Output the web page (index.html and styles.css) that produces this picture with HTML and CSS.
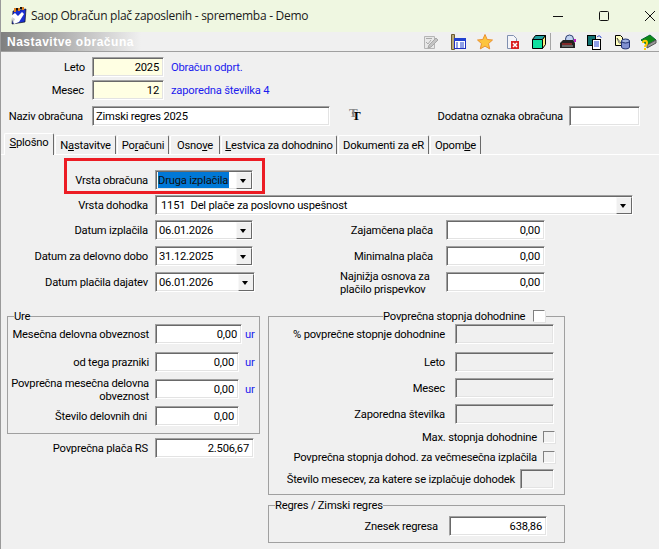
FILE: index.html
```html
<!DOCTYPE html>
<html lang="sl">
<head>
<meta charset="utf-8">
<title>Saop Obračun plač zaposlenih</title>
<link rel="stylesheet" href="styles.css">
</head>
<body>
<div class="window">
  <header class="titlebar">
    <svg class="appicon" width="18" height="18" viewBox="0 0 18 18"><path d="M4 4l13-2-1 13-13 2z" fill="#1a2fd0" stroke="#000" stroke-width=".6"/><path d="M2 9l4-3 3 3 4-4 2 2-5 8-5 2z" fill="#fff"/><path d="M3 10l3 2-2 4z" fill="#ccc"/><path d="M5 1h2v4H5zM9 1h2v3H9zM13 0h2v3h-2z" fill="#e08020"/><path d="M7 1h2v2H7zM11 0h2v2h-2z" fill="#111"/></svg>
    <span class="apptitle">Saop Obračun plač zaposlenih - sprememba - Demo</span>
    <div class="winctl">
      <svg width="12" height="12" viewBox="0 0 12 12"><path d="M1 6.500h10" stroke="#111"/></svg>
      <svg width="12" height="12" viewBox="0 0 12 12"><rect x="1.500" y="1.500" width="9" height="9" rx="1" fill="none" stroke="#111"/></svg>
      <svg width="12" height="12" viewBox="0 0 12 12"><path d="M1 1l10 10M11 1L1 11" stroke="#111"/></svg>
    </div>
  </header>
  <div class="toolbar">
    <span class="formtitle">Nastavitve obračuna</span>
    <div class="tools">
      <svg width="16" height="16" viewBox="0 0 16 16"><path d="M1.500 2.500h10v12h-10z" fill="#e8e8e8" stroke="#b5b5b5"/><path d="M3 8l2 2 3-4M3 4.500h6" stroke="#aaa" fill="none"/><path d="M6 11l7-7 2 2-7 7-3 1z" fill="#c4c4c4" stroke="#a8a8a8"/></svg>
      <svg width="16" height="16" viewBox="0 0 16 16"><path d="M1.500.5h3v15h-3z" fill="#b8a878" stroke="#6b5c30"/><rect x="4.500" y="4.500" width="11" height="10" fill="#fff" stroke="#2030c0"/><rect x="4" y="4" width="12" height="3" fill="#2040d0"/><path d="M6 9h2M10 9h4M6 11h2M10 11h4M6 13h2M10 13h4" stroke="#2040d0"/></svg>
      <svg width="16" height="16" viewBox="0 0 16 16"><path d="M8 .5l2.200 5 5.300.5-4 3.600 1.200 5.300L8 12.100l-4.700 2.800 1.200-5.300-4-3.600 5.300-.5z" fill="#fdc53e" stroke="#ea9030"/></svg>
      <svg width="16" height="16" viewBox="0 0 16 16"><path d="M3.500 1.500h6l3 3v10h-9z" fill="#f4f4f8" stroke="#8090b0"/><rect x="7" y="7" width="8" height="8" fill="#d92020"/><path d="M9 9l4 4M13 9l-4 4" stroke="#fff" stroke-width="1.500"/></svg>
      <svg width="16" height="16" viewBox="0 0 16 16"><path d="M1.500 5.500h10v9h-10z" fill="#10e0a0" stroke="#000"/><path d="M1.500 5.500l3-4h10l-3 4z" fill="#20a0a0" stroke="#000"/><path d="M11.500 5.500l3-4v9l-3 4z" fill="#f8f080" stroke="#000"/></svg>
      <i class="tsep"></i>
      <svg width="16" height="16" viewBox="0 0 16 16"><circle cx="9.500" cy="5" r="4" fill="#c0d0f0" stroke="#304070"/><path d="M0 9l3-3h10l2 3v5H0z" fill="#222"/><path d="M2 10h10" stroke="#e03030"/><path d="M2 12h11" stroke="#aaa"/><rect x="14" y="5" width="2" height="3" fill="#c020c0"/></svg>
      <svg width="16" height="16" viewBox="0 0 16 16"><rect x=".5" y="1.500" width="8" height="10" fill="#107070" stroke="#000"/><rect x="5.500" y="5.500" width="8" height="10" fill="#fff" stroke="#000"/><path d="M7 8h5M7 10h5M7 12h5" stroke="#2040d0"/><path d="M10 3c2-2 4-1 4 1" fill="none" stroke="#2040d0"/></svg>
      <svg width="16" height="16" viewBox="0 0 16 16"><path d="M1.500 1.500h5l2 2v8h-7z" fill="#ffffc0" stroke="#000"/><path d="M7.500 7v6c0 2.500 8 2.500 8 0V7z" fill="#8090d0" stroke="#203070"/><ellipse cx="11.500" cy="7" rx="4" ry="2" fill="#a0b0e0" stroke="#203070"/><path d="M3 4l4 5-2 0z" fill="#fff" stroke="#000" stroke-width=".5"/></svg>
      <svg width="16" height="16" viewBox="0 0 16 16"><path d="M0 6l9-5 6 5-9 5z" fill="#0e8a16" stroke="#063"/><path d="M6 11l9-5v3l-9 5z" fill="#999" stroke="#555"/><path d="M2 9c0-3 4-3 4 0 0 2-2 2-2 4M4 14v2" fill="none" stroke="#fc0" stroke-width="2"/></svg>
    </div>
  </div>

  <section class="head">
    <div class="row hrow">
      <label class="lbl lbl-head">Leto</label>
      <div class="field req num w-year">2025</div>
      <span class="note">Obračun odprt.</span>
    </div>
    <div class="row hrow row-mesec">
      <label class="lbl lbl-head">Mesec</label>
      <div class="field req num w-year">12</div>
      <span class="note">zaporedna številka 4</span>
    </div>
    <div class="row hrow row-naziv">
      <label class="lbl lbl-head">Naziv obračuna</label>
      <div class="field w-name">Zimski regres 2025</div>
      <span class="tt">T</span>
      <label class="lbl-dod">Dodatna oznaka obračuna</label>
      <div class="field w-dod"></div>
    </div>
  </section>

  <nav class="tabs">
    <span class="tab active"><u>S</u>plošno</span>
    <span class="tab t-nast">N<u>a</u>stavitve</span>
    <span class="tab t-por">Po<u>r</u>ačuni</span>
    <span class="tab t-osn">Osno<u>v</u>e</span>
    <span class="tab t-les"><u>L</u>estvica za dohodnino</span>
    <span class="tab t-dok">Dokumenti za eR</span>
    <span class="tab t-opo">Opom<u>b</u>e</span>
  </nav>

  <main class="panel">
    <div class="redbox"></div>
    <div class="row row-vrsta">
      <label class="lbl">Vrsta obračuna</label>
      <div class="combo w-combo"><span class="sel">Druga izplačila</span><b class="drop"></b></div>
    </div>
    <div class="row row-doh">
      <label class="lbl">Vrsta dohodka</label>
      <div class="combo w-doh"><span class="val-doh">1151&nbsp; Del plače za poslovno uspešnost</span><b class="drop"></b></div>
    </div>

    <div class="row row-d1">
      <label class="lbl">Datum izplačila</label>
      <div class="combo w-combo"><span class="val">06.01.2026</span><b class="drop"></b></div>
      <label class="lbl-r">Zajamčena plača</label>
      <div class="field num w-right">0,00</div>
    </div>
    <div class="row row-d2">
      <label class="lbl">Datum za delovno dobo</label>
      <div class="combo w-combo"><span class="val">31.12.2025</span><b class="drop"></b></div>
      <label class="lbl-r">Minimalna plača</label>
      <div class="field num w-right">0,00</div>
    </div>
    <div class="row row-d2">
      <label class="lbl">Datum plačila dajatev</label>
      <div class="combo w-combo2"><span class="val">06.01.2026</span><b class="drop"></b></div>
      <label class="lbl-r lbl-two">Najnižja osnova za<br>plačilo prispevkov</label>
      <div class="field num w-right">0,00</div>
    </div>

    <div class="cols">
      <div class="col-left">
        <fieldset class="group g-ure">
          <legend>Ure</legend>
          <div class="grow">
            <label class="glbl">Mesečna delovna obveznost</label>
            <div class="field num w-ure1">0,00</div><span class="note unit">ur</span>
          </div>
          <div class="grow gap8">
            <label class="glbl">od tega prazniki</label>
            <div class="field num w-ure">0,00</div><span class="note unit2">ur</span>
          </div>
          <div class="grow gap7">
            <label class="glbl tight">Povprečna mesečna delovna<br>obveznost</label>
            <div class="field num w-ure">0,00</div><span class="note unit2">ur</span>
          </div>
          <div class="grow gap7">
            <label class="glbl pad2">Število delovnih dni</label>
            <div class="field num w-ure">0,00</div>
          </div>
        </fieldset>
        <div class="row row-povp">
          <label class="lbl">Povprečna plača RS</label>
          <div class="field num w-povp">2.506,67</div>
        </div>
      </div>

      <div class="col-right">
        <fieldset class="group g-stop">
          <legend class="leg-stop">Povprečna stopnja dohodnine <i class="check white"></i></legend>
          <div class="srow">
            <label class="slbl">% povprečne stopnje dohodnine</label>
            <div class="field dis w-stop"></div>
          </div>
          <div class="srow gap8">
            <label class="slbl">Leto</label>
            <div class="field dis w-stop"></div>
          </div>
          <div class="srow gap6">
            <label class="slbl">Mesec</label>
            <div class="field dis w-stop"></div>
          </div>
          <div class="srow gap6">
            <label class="slbl">Zaporedna številka</label>
            <div class="field dis w-stop"></div>
          </div>
          <div class="crow c1">Max. stopnja dohodnine <i class="check"></i></div>
          <div class="crow c2">Povprečna stopnja dohod. za večmesečna izplačila <i class="check"></i></div>
          <div class="srow c3">
            <label class="slbl2">Število mesecev, za katere se izplačuje dohodek</label>
            <div class="field dis w-st"></div>
          </div>
        </fieldset>
        <fieldset class="group g-reg">
          <legend>Regres / Zimski regres</legend>
          <div class="srow reg-row">
            <label class="slbl3">Znesek regresa</label>
            <div class="field num w-reg">638,86</div>
          </div>
        </fieldset>
      </div>
    </div>
  </main>
</div>
</body>
</html>
```
FILE: styles.css
```css
* { box-sizing: border-box; }
html, body { margin: 0; padding: 0; }
body { width: 659px; height: 549px; overflow: hidden; background: #f0f0f0; }
.window {
  width: 659px; height: 549px; overflow: hidden; position: relative;
  background: #f0f0f0; color: #000; white-space: nowrap;
  font: 11.2px/14px Roboto, "Liberation Sans", sans-serif; letter-spacing: -.2px;
  border-left: 1px solid #9a9a9a;
}
.titlebar {
  height: 32px; background: #eff7e1; display: flex; align-items: center;
}
.appicon { margin-left: 8px; }
.apptitle { margin-left: 4px; font: 12px/16px "Open Sans", "Noto Sans", sans-serif; letter-spacing: -.28px; color: #1a1a1a; }
.winctl { margin-left: auto; display: flex; gap: 34px; margin-right: 3px; }
.toolbar {
  height: 20px; display: flex; align-items: center; border-bottom: 1px solid #a0a0a0;
  background: linear-gradient(90deg, #7f7f7f 0, #f0f0f0 140px);
}
.formtitle { margin-left: 6px; color: #fff; font: bold 12px/16px "Liberation Sans", sans-serif; letter-spacing: .5px; }
.tools { margin-left: auto; margin-right: 2px; display: flex; align-items: center; gap: 11px; height: 18px; }
.tools svg { flex: none; }
.tsep { width: 1px; height: 17px; background: #a5a5a5; margin: 0 -2px 0 -8px; }

.head { padding-top: 5px; height: 81px; }
.row { display: flex; align-items: center; height: 20px; }
.row-mesec { margin-top: 3px; }
.row-naziv { margin-top: 6px; }
.lbl, .lbl-r, .lbl-dod, .glbl, .slbl, .slbl2, .slbl3, .note { padding-top: 2px; }
.lbl-head { width: 84px; margin-right: 7px; }
.row-mesec .lbl-head { padding-right: 1px; }
.row-naziv .lbl-head { padding-right: 2px; }
.lbl { flex: none; text-align: right; }
.row .lbl:not(.lbl-head) { width: 147px; margin-right: 7px; }
.note { color: #1c1cee; }
.hrow .note { margin-left: 7px; }
.field {
  flex: none; height: 20px; padding: 3px 3px 0; background: #fff;
  border: 1px solid; border-color: #a0a0a0 #fff #fff #a0a0a0;
  box-shadow: inset 1px 1px 0 #696969, inset -1px -1px 0 #e3e3e3;
}
.num { text-align: right; padding-right: 4px; }
.req { background: #ffffe3; }
.dis { background: #f0f0f0; }
.w-year { width: 72px; }
.w-name { width: 238px; }
.w-dod { width: 71px; margin-left: 6px; }
.tt { flex: none; width: 14px; margin-left: 19px; height: 20px; padding: 3px 0 0 3px; position: relative; font: bold 13px/13px "Liberation Serif", serif; color: #000; }
.tt::before { content: "T"; position: absolute; left: 0; top: 0; color: #888; z-index: 0; }
.lbl-dod { flex: none; width: 127px; margin-left: 73px; text-align: right; }

.tabs { display: flex; align-items: flex-end; height: 22px; padding-left: 3px; border-bottom: 1px solid #fff; }
.tab {
  flex: none; height: 19px; padding: 3px 0 0; text-align: center; margin-left: 1px; margin-bottom: 0;
  border: 1px solid; border-color: #fff #6a6a6a transparent #fff; border-bottom: 0;
  border-radius: 2px 2px 0 0; background: #f0f0f0;
}
.tab.active { width: 50px; height: 22px; margin-left: 0; padding-top: 2px; margin-bottom: -1px; position: relative; }
.t-nast { width: 61px; }
.t-por { width: 52px; }
.t-osn { width: 50px; }
.t-les { width: 116px; }
.t-dok { width: 91px; }
.t-opo { width: 51px; }

.panel { position: relative; height: 394px; padding-top: 15px; }
.redbox { position: absolute; left: 63px; top: 3px; width: 201px; height: 36px; border: 3px solid #ec1c24; pointer-events: none; }
.combo {
  flex: none; height: 20px; display: flex; align-items: center; background: #fff; padding-left: 3px;
  border: 1px solid; border-color: #a0a0a0 #fff #fff #a0a0a0;
  box-shadow: inset 1px 1px 0 #696969, inset -1px -1px 0 #e3e3e3;
}
.w-combo { width: 98px; }
.w-combo2 { width: 100px; }
.w-doh { width: 478px; }
.drop {
  margin-left: auto; width: 16px; height: 17px; flex: none; position: relative; background: #f0f0f0;
  border: 1px solid; border-color: #f8f8f8 #696969 #696969 #f8f8f8;
}
.drop::after {
  content: ""; position: absolute; left: 3px; top: 6px;
  border-style: solid; border-color: #000 transparent transparent; border-width: 4px 3.5px 0;
}
.sel { background: #0078d7; color: #111; padding: 1px 1px 0 0; height: 16px; line-height: 15px; margin-left: -1px; }
.val, .val-doh { padding-top: 2px; }
.val-doh { padding-left: 2px; }
.row-doh { margin-top: 5px; }
.row-d1 { margin-top: 5px; }
.row-d2 { margin-top: 6px; }
.lbl-r { width: 180px; text-align: right; flex: none; margin-right: 13px; }
.w-combo2 + .lbl-r { width: 178px; }
.lbl-two { text-align: left; padding-left: 85px; line-height: 13px; }
.w-right { width: 99px; }

.cols { display: flex; margin-top: 17px; align-items: flex-start; }
.col-left { width: 261px; margin-left: 6px; flex: none; }
.col-right { width: 297px; flex: none; }
.group { margin: 0; padding: 0; border: 1px solid #a0a0a0; min-width: 0; }
.group legend { padding: 0; margin-left: 6px; line-height: 14px; background: #f0f0f0; position: relative; top: 1px; }
.g-ure { width: 253px; height: 125px; padding-top: 1px; }
.grow { display: flex; align-items: center; height: 20px; }
.gap7 { margin-top: 7px; }
.gap8 { margin-top: 8px; }
.glbl { width: 141px; margin-right: 6px; text-align: right; flex: none; }
.tight { line-height: 13px; }
.pad2 { padding-right: 2px; }
.w-ure1 { width: 87px; }
.w-ure { width: 84px; }
.unit { margin-left: 3px; }
.unit2 { margin-left: 6px; }
.row-povp { margin-top: 4px; margin-left: -6px; }
.w-povp { width: 99px; }
.g-stop { width: 297px; height: 186px; padding-top: 1px; }
.group .leg-stop { margin-left: 114px; padding-right: 1px; display: flex; align-items: center; gap: 8px; }
.check {
  display: block; flex: none; width: 12px; height: 12px; margin-top: -2px; background: #f0f0f0;
  border: 1px solid; border-color: #808080 #fff #fff #808080;
  box-shadow: 1px 1px 0 #e3e3e3;
}
.white { background: #fff; }
.srow { display: flex; align-items: center; height: 20px; }
.gap6 { margin-top: 6px; }
.slbl { width: 176px; margin-right: 10px; text-align: right; flex: none; }
.w-stop { width: 99px; }
.crow { display: flex; align-items: center; justify-content: flex-end; height: 14px; padding: 2px 9px 0 0; gap: 6px; }
.c1 { margin-top: 6px; }
.c2 { margin-top: 6px; }
.c3 { margin-top: 5px; }
.slbl2 { width: 246px; text-align: right; margin-right: 5px; flex: none; }
.w-st { width: 34px; }
.g-reg { width: 297px; height: 45px; margin-top: 3px; }
.reg-row { margin-top: 4px; }
.slbl3 { width: 169px; margin-right: 11px; text-align: right; flex: none; }
.w-reg { width: 98px; }
```
